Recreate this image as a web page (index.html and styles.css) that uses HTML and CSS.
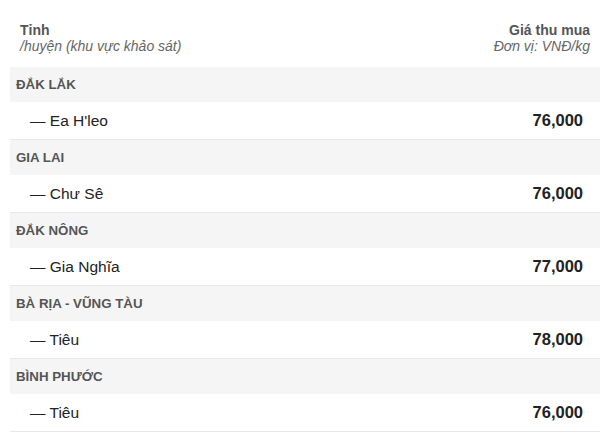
FILE: index.html
```html
<!DOCTYPE html>
<html lang="vi">
<head>
<meta charset="utf-8">
<link rel="stylesheet" href="styles.css">
</head>
<body>
<div class="table">
  <div class="head">
    <div class="head-left">
      <div class="h-title">Tỉnh</div>
      <div class="h-sub">/huyện (khu vực khảo sát)</div>
    </div>
    <div class="head-right">
      <div class="h-title">Giá thu mua</div>
      <div class="h-sub">Đơn vị: VNĐ/kg</div>
    </div>
  </div>

  <div class="prov">Đắk Lắk</div>
  <div class="item"><span class="name">— Ea H'leo</span><span class="price">76,000</span></div>

  <div class="prov">Gia Lai</div>
  <div class="item"><span class="name">— Chư Sê</span><span class="price">76,000</span></div>

  <div class="prov">Đắk Nông</div>
  <div class="item"><span class="name">— Gia Nghĩa</span><span class="price">77,000</span></div>

  <div class="prov">Bà Rịa - Vũng Tàu</div>
  <div class="item"><span class="name">— Tiêu</span><span class="price">78,000</span></div>

  <div class="prov">Bình Phước</div>
  <div class="item"><span class="name">— Tiêu</span><span class="price">76,000</span></div>
</div>
</body>
</html>
```

FILE: styles.css
```css
html, body {
  margin: 0;
  padding: 0;
  background: #fff;
}
body {
  font-family: "Liberation Sans", Arial, sans-serif;
  color: #222;
}
.table {
  margin-left: 10px;
  display: flex;
  flex-direction: column;
}
.head {
  height: 67px;
  box-sizing: border-box;
  padding: 22px 10px 0 10px;
  display: flex;
  justify-content: space-between;
}
.head-right {
  text-align: right;
}
.h-title {
  font-size: 14px;
  line-height: 16px;
  font-weight: bold;
  color: #555;
}
.h-sub {
  font-size: 14px;
  line-height: 16px;
  font-style: italic;
  color: #666;
}
.prov {
  height: 35px;
  box-sizing: border-box;
  background: #f5f5f5;
  padding-left: 6px;
  display: flex;
  align-items: center;
  font-size: 13.3px;
  font-weight: bold;
  text-transform: uppercase;
  color: #555;
}
.item {
  height: 38px;
  box-sizing: border-box;
  border-bottom: 1px solid #e8e8e8;
  padding: 0 17px 0 20px;
  display: flex;
  align-items: center;
  justify-content: space-between;
  font-size: 15.5px;
  color: #222;
}
.price {
  font-size: 16.5px;
  font-weight: bold;
  color: #222;
}
```
